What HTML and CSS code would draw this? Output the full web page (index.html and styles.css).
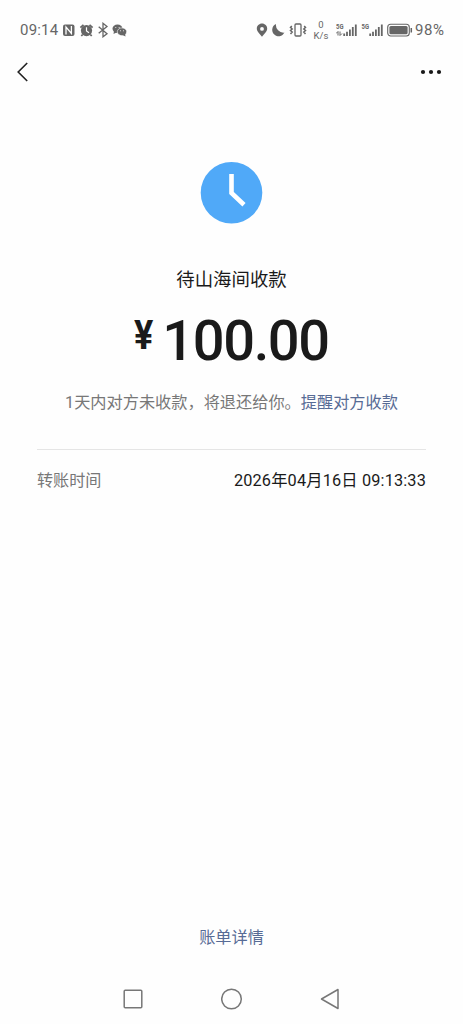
FILE: index.html
```html
<!DOCTYPE html>
<html lang="zh-CN">
<head>
<meta charset="utf-8">
<title>转账</title>
<link rel="stylesheet" href="styles.css">
</head>
<body>
<div class="screen">
  <header class="status">
    <span class="time">09:14</span>
    <svg class="status-left" width="66" height="16" viewBox="0 0 66 16">
      <rect x="1" y="2.5" width="11.5" height="11.5" rx="2" fill="#666"/>
      <path d="M4 12.5V5L9.4 11.5V4" fill="none" stroke="#fff" stroke-width="1.3"/>
      <circle cx="24.5" cy="8.6" r="5.6" fill="#666"/>
      <path d="M18.4 5.7L21.5 2.8M27.5 2.8L30.6 5.7M20.7 12.5L19.3 14M28.3 12.5L29.7 14" stroke="#666" stroke-width="1.8"/>
      <path d="M24.5 5.3V9L27 10.8" fill="none" stroke="#fff" stroke-width="1.2"/>
      <path d="M36.7 4.8L45 11.7L41 14.8V1.3L45 4.5L36.7 11.3" fill="none" stroke="#666" stroke-width="1.3"/>
      <ellipse cx="55.5" cy="6.8" rx="5" ry="4.2" fill="#666"/>
      <path d="M52 9L51.5 12L54.5 10.5" fill="#666"/>
      <ellipse cx="60" cy="9.8" rx="4.7" ry="3.9" fill="#666" stroke="#fff" stroke-width=".6"/>
      <path d="M60.5 13L63.5 14.4L63 11.5" fill="#666"/>
      <g fill="#fff"><circle cx="53.8" cy="5.4" r=".5"/><circle cx="57.1" cy="5.4" r=".5"/><circle cx="58.5" cy="8.8" r=".5"/><circle cx="61.5" cy="8.8" r=".5"/></g>
    </svg>
    <svg class="status-mid" width="52" height="16" viewBox="0 0 52 16">
      <path fill="#666" fill-rule="evenodd" d="M6 1.6C3 1.6.8 3.9.8 6.7C.8 9.5 4 12 6 14.8C8 12 11.2 9.5 11.2 6.7C11.2 3.9 9 1.6 6 1.6ZM6 5A1.9 1.9 0 1 1 6 8.8A1.9 1.9 0 1 1 6 5Z"/>
      <path fill="#666" d="M20 2A6.4 6.4 0 1 0 28.4 10.6A7.6 7.6 0 0 1 20 2Z"/>
      <rect x="39" y="2" width="6" height="12" rx="1" fill="none" stroke="#666" stroke-width="1.3"/>
      <path d="M35.8 4L34.5 5.5L36.2 7L34.5 8.5L36.2 10L34.5 12M48.2 4L49.5 5.5L47.8 7L49.5 8.5L47.8 10L49.5 12" fill="none" stroke="#666" stroke-width="1.5"/>
    </svg>
    <div class="speed"><span>0</span><span>K/s</span></div>
    <svg class="signals" width="48" height="16" viewBox="0 0 48 16">
      <text class="gen" x="0" y="7" textLength="7.5" lengthAdjust="spacingAndGlyphs">5G</text>
      <text class="gen" x="25.5" y="7" textLength="7.5" lengthAdjust="spacingAndGlyphs">5G</text>
      <path d="M0 11.5L2 9.5V13.5M4 9.5V13.5L6 11.5" fill="none" stroke="#666"/>
      <path d="M8.2 14V11.5M11 14V9.8M13.9 14V7.5M16.8 14V5M19.8 14V2.5M34.2 14V11.5M37 14V9.8M39.9 14V7.5M42.8 14V5M45.8 14V2.5" stroke="#666" stroke-width="1.8"/>
    </svg>
    <svg class="battery" width="26" height="16" viewBox="0 0 26 16">
      <rect x=".7" y="2.2" width="21.6" height="11.8" rx="3" fill="none" stroke="#666" stroke-width="1.1"/>
      <rect x="2.4" y="4" width="18.2" height="8.2" rx="1.5" fill="#666"/>
      <path d="M24.3 6V10.5" stroke="#666" stroke-width="1.5"/>
    </svg>
    <span class="percent">98%</span>
  </header>
  <nav class="navbar">
    <svg width="13" height="20" viewBox="0 0 13 20"><path d="M11.2 1L2.2 10L11.2 19" fill="none" stroke="#222" stroke-width="1.6"/></svg>
    <svg width="22" height="6" viewBox="0 0 22 6" fill="#181818"><circle cx="3" cy="3" r="2.1"/><circle cx="11" cy="3" r="2.1"/><circle cx="19" cy="3" r="2.1"/></svg>
  </nav>
  <main class="content">
    <svg class="clock" width="63" height="62" viewBox="0 0 63 62"><circle cx="31.5" cy="30.8" r="30.8" fill="#50a9f8"/><path d="M31.5 12V31L44 42.7" fill="none" stroke="#fff" stroke-width="4.6"/></svg>
    <h1 class="title">待山海间收款</h1>
    <div class="amount"><span class="yen">¥</span><span class="value">100.00</span></div>
    <p class="hint">1天内对方未收款，将退还给你。<a class="link">提醒对方收款</a></p>
    <div class="detail"><span class="label">转账时间</span><span class="date">2026年04月16日 09:13:33</span></div>
  </main>
  <footer class="footer"><a class="link">账单详情</a></footer>
  <div class="system">
    <svg width="20" height="22" viewBox="0 0 20 22"><rect x="1.2" y="2.2" width="17.6" height="17.6" rx="1" class="key"/></svg>
    <svg width="22" height="22" viewBox="0 0 22 22"><circle cx="10.5" cy="11" r="9.8" class="key"/></svg>
    <svg width="20" height="22" viewBox="0 0 20 22"><path d="M18 1.5V20.5L1.5 11Z" stroke-linejoin="round" class="key"/></svg>
  </div>
</div>
</body>
</html>
```
FILE: styles.css
```css
* { box-sizing: border-box; }
body { margin: 0; background: #fefefe; font-family: Roboto, "Noto Sans CJK SC", sans-serif; color: #1a1a1a; }
svg { display: block; flex: none; }
.screen { width: 463px; height: 1024px; display: flex; flex-direction: column; }
.status { height: 44px; padding: 16px 0 0 20px; display: flex; align-items: center; color: #666; font-size: 15px; white-space: nowrap; }
.time { width: 42px; letter-spacing: .2px; }
.status-mid { margin-left: 128px; }
.speed { width: 18px; margin-left: 4px; display: flex; flex-direction: column; align-items: center; font-size: 9.5px; line-height: 11px; }
.signals { margin-left: 6px; }
.gen { font: 700 7px Roboto, sans-serif; fill: #666; }
.battery { margin-left: 3px; }
.percent { margin-left: 2px; letter-spacing: .6px; }
.navbar { height: 56px; padding: 0 21px 0 16px; display: flex; align-items: center; justify-content: space-between; }
.content { flex: 1; padding: 62px 37px 0; display: flex; flex-direction: column; align-items: center; }
.title { margin: 42px 0 0; font-size: 18.4px; font-weight: 400; line-height: 28px; }
.amount { margin-top: 25px; height: 50px; display: flex; align-items: flex-start; gap: 6px; }
.yen { width: 22px; font-size: 40px; font-weight: 700; line-height: 34px; transform: scaleX(.9); transform-origin: left; }
.value { font-size: 56px; font-weight: 500; line-height: 44px; letter-spacing: -1.4px; }
.hint { margin: 21px 0 0; font-size: 16.2px; line-height: 25px; color: #777; white-space: nowrap; }
.link { color: #576b95; }
.detail { width: 389px; margin-top: 34px; padding-top: 18px; border-top: 1px solid #e5e5e5; display: flex; justify-content: space-between; font-size: 16.1px; line-height: 25px; }
.label { color: #777; }
.date { font-size: 16.3px; letter-spacing: .16px; }
.footer { height: 50px; text-align: center; font-size: 16.2px; line-height: 25px; }
.system { height: 49px; padding: 13px 123px 0; display: flex; align-items: flex-start; justify-content: space-between; }
.key { fill: none; stroke: #777; stroke-width: 1.5; }
```
